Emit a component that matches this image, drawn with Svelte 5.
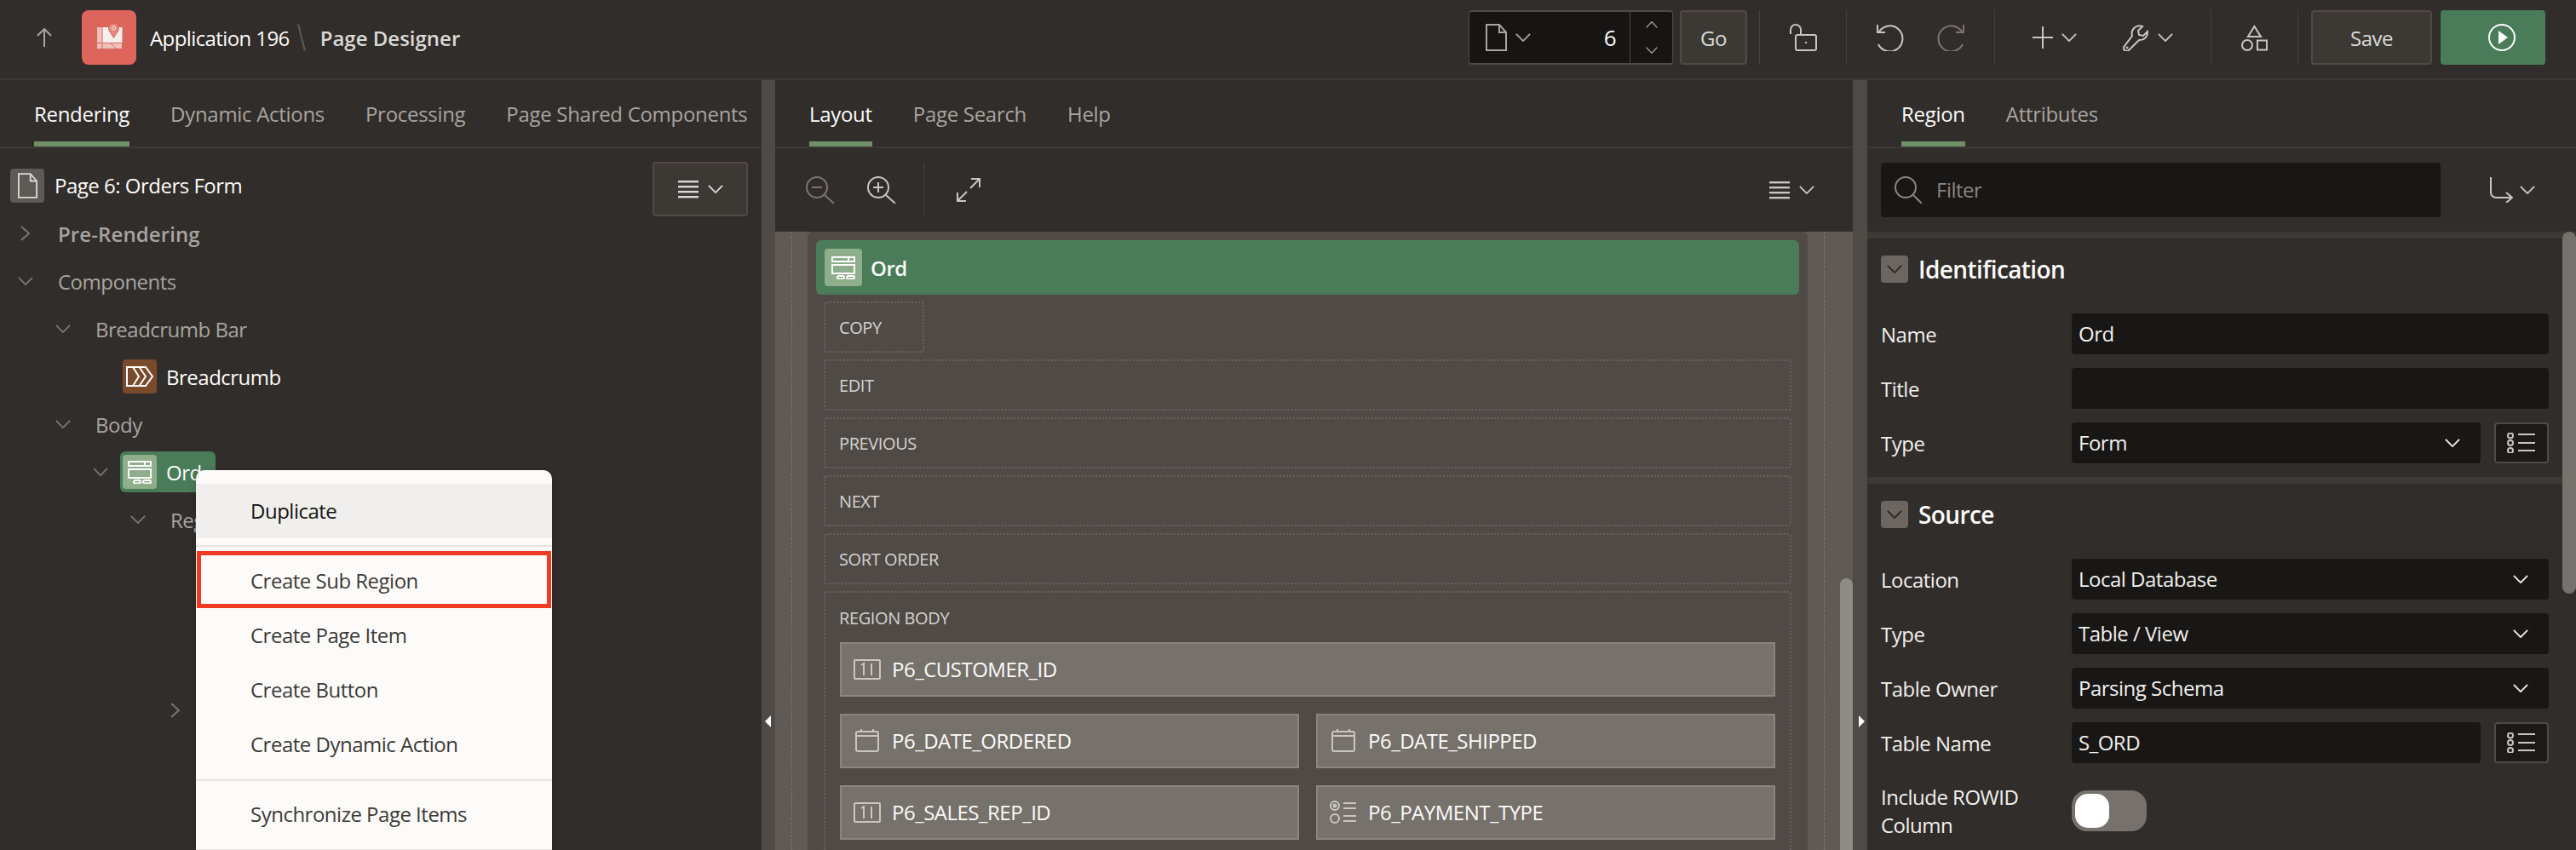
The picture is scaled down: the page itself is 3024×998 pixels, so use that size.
<script>
  const tabsLeft = ["Rendering", "Dynamic Actions", "Processing", "Page Shared Components"];
  const tabsMid = ["Layout", "Page Search", "Help"];
  const tabsRight = ["Region", "Attributes"];

  const tree = [
    { label: "Pre-Rendering", level: 0, state: "closed", strong: true },
    { label: "Components", level: 0, state: "open" },
    { label: "Breadcrumb Bar", level: 1, state: "open" },
    { label: "Breadcrumb", level: 2, icon: "crumb" },
    { label: "Body", level: 1, state: "open" },
    { label: "Ord", level: 2, state: "open", icon: "region", selected: true },
    { label: "Reg", level: 3, state: "open" },
    { level: 4 },
    { level: 4 },
    { level: 4 },
    { level: 4, state: "closed" }
  ];

  const slots = [
    { label: "COPY", short: true },
    { label: "EDIT" },
    { label: "PREVIOUS" },
    { label: "NEXT" },
    { label: "SORT ORDER" }
  ];

  const items = [
    { label: "P6_CUSTOMER_ID", icon: "number", wide: true },
    { label: "P6_DATE_ORDERED", icon: "date" },
    { label: "P6_DATE_SHIPPED", icon: "date" },
    { label: "P6_SALES_REP_ID", icon: "number" },
    { label: "P6_PAYMENT_TYPE", icon: "radio" }
  ];

  const identification = [
    { label: "Name", value: "Ord" },
    { label: "Title", value: "" },
    { label: "Type", value: "Form", select: true, picker: true }
  ];

  const source = [
    { label: "Location", value: "Local Database", select: true },
    { label: "Type", value: "Table / View", select: true },
    { label: "Table Owner", value: "Parsing Schema", select: true },
    { label: "Table Name", value: "S_ORD", picker: true }
  ];
</script>

{#snippet chevron(w = 20, h = 12)}
  <svg class="chev" width={w} height={h} viewBox="0 0 20 12" preserveAspectRatio="none" fill="none" stroke="currentColor" stroke-width="2"><path d="M1 1l9 10 9-10" /></svg>
{/snippet}

{#snippet chevronRight()}
  <svg width="12" height="18" viewBox="0 0 12 18" fill="none" stroke="currentColor" stroke-width="2"><path d="M1 1l9 8-9 8" /></svg>
{/snippet}

{#snippet lines()}
  <svg width="24" height="21" viewBox="0 0 24 21" fill="currentColor"><rect width="24" height="2.4" /><rect y="6" width="24" height="2.4" /><rect y="12" width="24" height="2.4" /><rect y="18" width="24" height="2.4" /></svg>
{/snippet}

{#snippet doc(w = 25, h = 32)}
  <svg width={w} height={h} viewBox="0 0 25 32" fill="none" stroke="currentColor" stroke-width="2"><path d="M1 1h15l8 9v21H1z" /><path d="M16 1v9h8" /></svg>
{/snippet}

{#snippet picker()}
  <svg width="34" height="24" viewBox="0 0 34 24" fill="none" stroke="currentColor" stroke-width="2"><circle cx="4" cy="3.5" r="3" /><circle cx="4" cy="12" r="3" /><circle cx="4" cy="21" r="3" /><path d="M13 2h20M13 12h20M13 21h20" /></svg>
{/snippet}

{#snippet regionIcon()}
  <svg width="28" height="27" viewBox="0 0 28 27" fill="none" stroke="#fff" stroke-width="2"><rect x="1" y="1" width="26" height="5" /><path d="M20 1v5" /><rect x="1" y="10" width="26" height="10" /><rect x="7" y="23" width="8" height="3.500" rx="1.700" /><rect x="18" y="23" width="9" height="3.500" rx="1.700" /></svg>
{/snippet}

{#snippet itemIcon(kind)}
  {#if kind === "number"}
    <svg width="32" height="24" viewBox="0 0 32 24" fill="none" stroke="#c9c6c2" stroke-width="2"><rect x="1" y="1" width="30" height="22" rx="1" /><path d="M9 7l3-2v14M21 5v14" /></svg>
  {:else if kind === "date"}
    <svg width="28" height="27" viewBox="0 0 28 27" fill="none" stroke="#c9c6c2" stroke-width="2"><rect x="1" y="3" width="26" height="23" rx="2" /><path d="M1 8h26M7 0v4M21 0v4" /></svg>
  {:else}
    <svg width="32" height="27" viewBox="0 0 32 27" fill="none" stroke="#c9c6c2" stroke-width="2"><circle cx="6" cy="6" r="5" /><circle cx="6" cy="6" r="1.5" fill="#c9c6c2" /><circle cx="6" cy="21" r="5" /><path d="M16 3h15M16 9h15M16 18h15M16 24h15" /></svg>
  {/if}
{/snippet}

{#snippet tabs(list)}
  <nav class="tabs">
    {#each list as tab, i}
      <span class="tab" class:active={i === 0}>{tab}</span>
    {/each}
  </nav>
{/snippet}

{#snippet field(f)}
  <label class="field-label" for={f.label}>{f.label}</label>
  <div class="control">
    <div class="input" id={f.label}>
      <span>{f.value}</span>
      {#if f.select}{@render chevron(18, 10)}{/if}
    </div>
    {#if f.picker}
      <span class="picker">{@render picker()}</span>
    {/if}
  </div>
{/snippet}

<div class="app">
  <header class="topbar">
    <div class="crumbs">
      <span class="up">
        <svg width="18" height="22" viewBox="0 0 18 22" fill="none" stroke="currentColor" stroke-width="2"><path d="M9 22V2M1 9l8-8 8 8" /></svg>
      </span>
      <span class="logo">
        <svg width="31" height="31" viewBox="0 0 31 31">
          <rect x="0.500" y="4.500" width="30" height="26" fill="#f2c0ba" stroke="#d0685e" />
          <rect x="7" y="5" width="23.500" height="18.500" fill="#f8eeeb" />
          <path d="M0.500 23.500h30M7 5v25.500M16.500 23.500l7.500 7" stroke="#d0685e" fill="none" />
          <path d="M20.500 0.500c-3.500 0-6 2.500-6 5.500 0 3.500 3.500 7 6 11.500 2.500-4.500 6-8 6-11.500 0-3-2.500-5.500-6-5.500z" fill="#e8897f" stroke="#d0685e" />
          <circle cx="20.500" cy="6" r="2" fill="none" stroke="#f8eeeb" />
        </svg>
      </span>
      <span class="app-name">Application 196</span>
      <span class="slash"></span>
      <span class="page-name">Page Designer</span>
    </div>

    <div class="actions">
      <div class="page-field">
        <span class="page-type">{@render doc()}{@render chevron(18, 10)}</span>
        <span class="page-no">6</span>
        <span class="spin">
          <span class="flip">{@render chevron(14, 8)}</span>
          {@render chevron(14, 8)}
        </span>
      </div>
      <span class="btn go">Go</span>
      <span class="sep"></span>
      <span class="tool lock">
        <svg width="33" height="32" viewBox="0 0 33 32" fill="none" stroke="currentColor" stroke-width="2"><path d="M2 12V7a6 6 0 0 1 12 0v5" /><rect x="8" y="13" width="24" height="18" rx="2" /><path d="M20 21v2" /></svg>
      </span>
      <span class="sep"></span>
      <span class="tool history">
        <svg width="33" height="32" viewBox="0 0 33 32" fill="none" stroke="currentColor" stroke-width="2"><path d="M4 9a15 15 0 1 1-1 15" /><path d="M2 1v9h9" /></svg>
        <svg class="dim" width="33" height="32" viewBox="0 0 33 32" fill="none" stroke="currentColor" stroke-width="2"><path d="M29 9a15 15 0 1 0 1 15" /><path d="M31 1v9h-9" /></svg>
      </span>
      <span class="sep"></span>
      <span class="tool create">
        <span class="pair">
          <svg width="24" height="26" viewBox="0 0 24 26" fill="none" stroke="currentColor" stroke-width="2"><path d="M12 0v26M0 13h24" /></svg>
          {@render chevron(18, 10)}
        </span>
        <span class="pair">
          <svg width="31" height="31" viewBox="0 0 31 31" fill="none" stroke="currentColor" stroke-width="2"><path d="M29 8l-5 5-5-1-1-5 5-5a9 9 0 0 0-12 11L2 25a3.500 3.500 0 0 0 5 5l12-12a9 9 0 0 0 10-10z" /><circle cx="5" cy="27" r="0.600" /></svg>
          {@render chevron(18, 10)}
        </span>
      </span>
      <span class="sep"></span>
      <span class="tool shared">
        <svg width="31" height="31" viewBox="0 0 31 31" fill="none" stroke="currentColor" stroke-width="2"><path d="M15.500 2l7.500 12H8z" /><circle cx="7" cy="24" r="6" /><rect x="19" y="18.500" width="11" height="11" /></svg>
      </span>
      <span class="sep"></span>
      <span class="btn save">Save</span>
      <span class="btn run">
        <svg width="32" height="32" viewBox="0 0 32 32"><circle cx="16" cy="16" r="15" fill="none" stroke="#fff" stroke-width="2" /><path d="M12 8l11 8-11 8z" fill="#fff" /></svg>
      </span>
    </div>
  </header>

  <main class="workspace">
    <section class="pane">
      {@render tabs(tabsLeft)}
      <div class="tree-head">
        <span class="page-icon">{@render doc(23, 32)}</span>
        <span class="page-title">Page 6: Orders Form</span>
        <span class="btn menu-btn">{@render lines()}{@render chevron(18, 10)}</span>
      </div>
      <ul class="tree">
        {#each tree as node}
          <li class="row" style="padding-left: {12 + 44 * node.level}px">
            <span class="twist">
              {#if node.state === "open"}{@render chevron(18, 10)}{/if}
              {#if node.state === "closed"}{@render chevronRight()}{/if}
            </span>
            {#if node.icon}
              <span class="node" class:selected={node.selected}>
                <span class="node-icon {node.icon}">
                  {#if node.icon === "crumb"}
                    <svg width="32" height="24" viewBox="0 0 32 24" fill="none" stroke="#fff" stroke-width="2"><path d="M1 1h22l8 11-8 11H1z" /><path d="M8 1l7 11-7 11M15.500 1l7.500 11-7.500 11" /></svg>
                  {:else}
                    {@render regionIcon()}
                  {/if}
                </span>
                <span>{node.label}</span>
              </span>
            {:else if node.label}
              <span class="row-label" class:strong={node.strong}>{node.label}</span>
            {/if}
          </li>
        {/each}
      </ul>

      <div class="context-menu">
        <div class="menu-item first">Duplicate</div>
        <hr />
        <div class="menu-item marked">Create Sub Region</div>
        <div class="menu-item">Create Page Item</div>
        <div class="menu-item">Create Button</div>
        <div class="menu-item">Create Dynamic Action</div>
        <hr />
        <div class="menu-item">Synchronize Page Items</div>
        <hr />
      </div>
    </section>

    <div class="gutter"><i class="tri left"></i></div>

    <section class="pane">
      {@render tabs(tabsMid)}
      <div class="layout-bar">
        <svg class="dim" width="34" height="32" viewBox="0 0 34 32" fill="none" stroke="currentColor" stroke-width="2"><circle cx="13" cy="13" r="12" /><path d="M22 22l11 10M7 13h12" /></svg>
        <svg class="zoom-in" width="34" height="32" viewBox="0 0 34 32" fill="none" stroke="currentColor" stroke-width="2"><circle cx="13" cy="13" r="12" /><path d="M22 22l11 10M7 13h12M13 7v12" /></svg>
        <span class="bar-sep"></span>
        <svg width="28" height="28" viewBox="0 0 28 28" fill="none" stroke="currentColor" stroke-width="2"><path d="M17 1h10v10M27 1L16 12M11 27H1V17M1 27l11-11" /></svg>
        <span class="bar-menu">{@render lines()}{@render chevron(18, 10)}</span>
      </div>
      <div class="canvas">
        <div class="margin"><i></i></div>
        <div class="page">
          <div class="region-bar">
            <span class="region-icon">{@render regionIcon()}</span>
            <span>Ord</span>
          </div>
          <div class="slots">
            {#each slots as slot}
              <div class="slot" class:short={slot.short}>{slot.label}</div>
            {/each}
            <div class="slot body">
              <div class="body-title">REGION BODY</div>
              <div class="items">
                {#each items as item}
                  <div class="item" class:wide={item.wide}>
                    <span class="item-icon">{@render itemIcon(item.icon)}</span>
                    <span>{item.label}</span>
                  </div>
                {/each}
              </div>
            </div>
          </div>
        </div>
        <div class="margin right"><i></i></div>
        <span class="scroll-thumb canvas-thumb"></span>
      </div>
    </section>

    <div class="gutter wide"><i class="tri right"></i></div>

    <section class="pane props">
      {@render tabs(tabsRight)}
      <div class="filter-bar">
        <div class="filter">
          <svg width="32" height="32" viewBox="0 0 32 32" fill="none" stroke="currentColor" stroke-width="2"><circle cx="13" cy="13" r="12" /><path d="M22 22l10 10" /></svg>
          <span class="filter-text">Filter</span>
        </div>
        <span class="goto">
          <svg width="28" height="30" viewBox="0 0 28 30" fill="none" stroke="currentColor" stroke-width="2"><path d="M2 0v18a6 6 0 0 0 6 6h19M20 18l7 6-7 6" /></svg>
          {@render chevron(18, 10)}
        </span>
      </div>
      <div class="prop-scroll">
        <section class="group">
          <h3><span class="toggle">{@render chevron(18, 10)}</span>Identification</h3>
          <div class="fields">
            {#each identification as f}{@render field(f)}{/each}
          </div>
        </section>
        <section class="group">
          <h3><span class="toggle">{@render chevron(18, 10)}</span>Source</h3>
          <div class="fields">
            {#each source as f}{@render field(f)}{/each}
            <span class="field-label rowid">Include ROWID Column</span>
            <div class="switch"><i></i></div>
          </div>
        </section>
        <span class="scroll-thumb prop-thumb"></span>
      </div>
    </section>
  </main>
</div>

<style>
  :global(body) {
    margin: 0;
    background: #312e2b;
  }
  .app {
    width: 3024px;
    height: 998px;
    overflow: hidden;
    display: flex;
    flex-direction: column;
    background: #312d2a;
    color: #fcfbfa;
    font-family: "Open Sans", "Noto Sans", sans-serif;
    font-size: 24px;
    letter-spacing: -0.5px;
  }

  /* top bar */
  .topbar {
    flex: none;
    height: 94px;
    box-sizing: border-box;
    padding-bottom: 4px;
    border-bottom: 2px solid #3d3a36;
    display: flex;
    justify-content: space-between;
    align-items: center;
  }
  .crumbs,
  .actions {
    display: flex;
    align-items: center;
    height: 64px;
  }
  .up {
    width: 96px;
    display: flex;
    justify-content: center;
    padding-left: 8px;
    box-sizing: border-box;
    color: #a8a4a0;
  }
  .logo {
    width: 64px;
    height: 64px;
    box-sizing: border-box;
    padding-bottom: 4px;
    border-radius: 8px;
    background: #dd655b;
    display: grid;
    place-items: center;
    margin-right: 16px;
  }
  .app-name {
    letter-spacing: -0.6px;
  }
  .slash {
    width: 2px;
    height: 32px;
    background: #5f5a56;
    transform: rotate(-14deg);
    margin: 0 21px 0 13px;
  }
  .page-name {
    font-weight: 600;
    color: #dbd9d6;
    letter-spacing: 0;
  }
  .actions {
    margin-right: 36px;
    color: #c9c6c2;
  }
  .page-field {
    width: 240px;
    height: 64px;
    box-sizing: border-box;
    background: #161513;
    border: solid #4f4a46;
    border-width: 2px 1px;
    border-radius: 4px;
    display: flex;
    align-items: center;
  }
  .page-type {
    display: flex;
    align-items: center;
    gap: 10px;
    padding-left: 19px;
    color: #a8a4a0;
  }
  .page-no {
    flex: 1;
    text-align: right;
    padding-right: 16px;
    color: #fcfbfa;
    font-size: 26px;
  }
  .spin {
    width: 49px;
    height: 100%;
    border-left: 1px solid #4f4a46;
    display: flex;
    flex-direction: column;
    justify-content: space-around;
    align-items: center;
    color: #a8a4a0;
  }
  .flip {
    display: flex;
    transform: scaleY(-1);
  }
  .btn {
    height: 64px;
    box-sizing: border-box;
    border: 2px solid #4f4a46;
    border-radius: 4px;
    background: #3c3935;
    display: flex;
    align-items: center;
    justify-content: center;
    color: #dbd9d6;
  }
  .go {
    width: 79px;
    margin-left: 8px;
    margin-right: 14px;
  }
  .sep {
    width: 1px;
    height: 64px;
    background: #45413d;
  }
  .tool {
    display: flex;
    align-items: center;
    justify-content: center;
  }
  .lock {
    width: 101px;
  }
  .history {
    width: 173px;
    gap: 39px;
  }
  .dim {
    color: #7a7570;
  }
  .create {
    width: 253px;
    gap: 54px;
  }
  .pair {
    display: flex;
    align-items: center;
    gap: 10px;
  }
  .shared {
    width: 101px;
  }
  .save {
    width: 142px;
    margin: 0 10px 0 15px;
  }
  .run {
    width: 123px;
    padding-left: 20px;
    background: #4a7c59;
    border-color: #4a7c59;
  }

  /* panes */
  .workspace {
    flex: 1;
    display: flex;
    min-height: 0;
  }
  .pane {
    flex: none;
    width: 894px;
    position: relative;
    display: flex;
    flex-direction: column;
    min-height: 0;
  }
  .pane:nth-of-type(2) {
    width: 1265px;
  }
  .pane.props {
    width: 832px;
  }
  .gutter {
    flex: none;
    width: 16px;
    background: #4f4a46;
    position: relative;
  }
  .gutter.wide {
    width: 17px;
  }
  .tri {
    position: absolute;
    top: 746px;
    width: 0;
    height: 0;
    border: 7px solid transparent;
  }
  .tri.left {
    left: 4px;
    border-right-color: #fcfbfa;
    border-left-width: 0;
  }
  .tri.right {
    right: 3px;
    border-left-color: #fcfbfa;
    border-right-width: 0;
  }

  .tabs {
    flex: none;
    height: 80px;
    box-sizing: border-box;
    border-bottom: 2px solid #3d3a36;
    padding-left: 40px;
    display: flex;
    gap: 48px;
  }
  .tab {
    height: 78px;
    box-sizing: border-box;
    padding-top: 7px;
    border-bottom: 6px solid transparent;
    display: flex;
    align-items: center;
    color: #a8a4a0;
    white-space: nowrap;
    letter-spacing: -0.3px;
  }
  .tab.active {
    color: #fcfbfa;
    border-bottom-color: #6f9168;
  }

  /* tree */
  .tree-head {
    flex: none;
    height: 72px;
    padding: 16px 16px 0 12px;
    box-sizing: border-box;
    display: flex;
    align-items: flex-start;
  }
  .page-icon {
    width: 40px;
    height: 40px;
    margin-top: 8px;
    background: #5f5a56;
    border-radius: 4px;
    display: grid;
    place-items: center;
    color: #dbd9d6;
  }
  .page-title {
    margin: 11px 0 0 12px;
    line-height: 34px;
  }
  .menu-btn {
    width: 112px;
    margin-left: auto;
    gap: 11px;
  }
  .tree {
    list-style: none;
    margin: 0;
    padding: 0;
  }
  .row {
    height: 56px;
    box-sizing: border-box;
    display: flex;
    align-items: center;
    color: #a8a4a0;
  }
  .twist {
    width: 36px;
    display: flex;
    justify-content: center;
    color: #7a7570;
    flex: none;
  }
  .row-label {
    margin-left: 20px;
  }
  .row-label.strong {
    font-weight: 600;
    letter-spacing: 0.1px;
  }
  .node {
    margin-left: 5px;
    padding: 0 3px;
    height: 48px;
    min-width: 106px;
    border-radius: 6px;
    display: flex;
    align-items: center;
    gap: 11px;
    color: #fcfbfa;
  }
  .node.selected {
    background: #4a7c59;
  }
  .node-icon {
    width: 40px;
    height: 40px;
    border-radius: 4px;
    display: grid;
    place-items: center;
    background: #8fae8b;
  }
  .node-icon.crumb {
    background: #7a4a2d;
  }

  /* context menu */
  .context-menu {
    position: absolute;
    left: 230px;
    top: 458px;
    width: 418px;
    padding-top: 16px;
    background: #fcfbfa;
    border-radius: 10px 10px 0 0;
    box-shadow: 0 2px 10px rgba(0, 0, 0, 0.15);
    color: #3d3a36;
  }
  .context-menu hr {
    margin: 8px 0;
    height: 2px;
    border: none;
    background: #e5e3e0;
  }
  .menu-item {
    height: 64px;
    box-sizing: border-box;
    padding: 0 0 3px 64px;
    display: flex;
    align-items: center;
    position: relative;
  }
  .menu-item.first {
    background: #f1efed;
    color: #161513;
    padding-bottom: 1px;
  }
  .menu-item.marked {
    margin-top: 9px;
  }
  .menu-item.marked::after {
    content: "";
    position: absolute;
    inset: -4px 1px 1px 1px;
    border: 5px solid #ee3b22;
  }

  /* layout editor */
  .layout-bar {
    flex: none;
    height: 98px;
    display: flex;
    align-items: center;
    padding: 0 45px 0 36px;
    color: #c9c6c2;
  }
  .zoom-in {
    margin-left: 38px;
  }
  .bar-sep {
    width: 1px;
    height: 64px;
    background: #45413d;
    margin: 0 38px 0 32px;
  }
  .bar-menu {
    margin-left: auto;
    display: flex;
    align-items: center;
    gap: 11px;
  }
  .canvas {
    flex: 1;
    display: flex;
    min-height: 0;
    background: #5f5a56;
    position: relative;
  }
  .margin {
    flex: none;
    width: 38px;
    padding-left: 19px;
    box-sizing: border-box;
  }
  .margin.right {
    width: 53px;
  }
  .margin i {
    display: block;
    height: 100%;
    border-left: 1px dashed #7a7570;
  }
  .page {
    flex: 1;
    min-width: 0;
    padding: 10px 10px 0;
    background: #4f4a46;
    border-radius: 6px 6px 0 0;
  }
  .region-bar {
    height: 64px;
    background: #4a7c59;
    border-radius: 6px;
    display: flex;
    align-items: center;
    padding-left: 10px;
    gap: 10px;
    font-weight: 600;
  }
  .region-icon {
    width: 44px;
    height: 44px;
    border-radius: 4px;
    background: #8fae8b;
    display: grid;
    place-items: center;
  }
  .slots {
    padding: 8px 9px 0;
    display: flex;
    flex-direction: column;
    gap: 8px;
  }
  .slot {
    height: 60px;
    box-sizing: border-box;
    border: 2px dotted #676260;
    border-radius: 3px;
    padding-left: 16px;
    display: flex;
    align-items: center;
    font-size: 20px;
    letter-spacing: -0.4px;
    color: #d6d3cf;
  }
  .slot.short {
    width: 118px;
  }
  .slot.body {
    height: 400px;
    display: block;
    padding: 0 17px 0 16px;
  }
  .body-title {
    height: 58px;
    display: flex;
    align-items: center;
  }
  .items {
    display: grid;
    grid-template-columns: 1fr 1fr;
    gap: 20px;
    margin-left: 1px;
  }
  .item {
    height: 64px;
    box-sizing: border-box;
    background: #76716b;
    border: 2px solid #8a8580;
    padding: 0 0 1px 14px;
    display: flex;
    align-items: center;
    font-size: 24px;
    letter-spacing: -0.5px;
    color: #fcfbfa;
  }
  .item.wide {
    grid-column: 1 / -1;
  }
  .item-icon {
    width: 32px;
    margin-right: 13px;
    display: flex;
    justify-content: center;
  }
  .scroll-thumb {
    position: absolute;
    right: 0;
    width: 15px;
    border-radius: 8px 8px 0 0;
  }
  .canvas-thumb {
    top: 407px;
    bottom: 0;
    background: #8f8b87;
  }

  /* property editor */
  .filter-bar {
    flex: none;
    height: 98px;
    padding-left: 16px;
    display: flex;
    align-items: center;
  }
  .filter {
    width: 657px;
    height: 64px;
    background: #181715;
    border-radius: 4px;
    padding-left: 16px;
    box-sizing: border-box;
    display: flex;
    align-items: center;
    gap: 17px;
    color: #8a8580;
  }
  .filter-text {
    padding-bottom: 2px;
  }
  .goto {
    margin-left: 57px;
    display: flex;
    align-items: center;
    gap: 8px;
    color: #c9c6c2;
  }
  .prop-scroll {
    flex: 1;
    position: relative;
    min-height: 0;
  }
  .prop-thumb {
    top: 0;
    width: 16px;
    height: 425px;
    background: #76716c;
    border-radius: 8px;
  }
  .group {
    border-top: 8px solid #3d3a36;
    padding: 20px 32px 16px 16px;
  }
  .group h3 {
    margin: 0 0 36px;
    height: 32px;
    display: flex;
    align-items: center;
    gap: 12px;
    font-size: 28px;
    font-weight: 600;
    letter-spacing: -0.6px;
  }
  .toggle {
    width: 32px;
    height: 32px;
    border-radius: 4px;
    background: #6b6661;
    display: grid;
    place-items: center;
    color: #2a2724;
  }
  .fields {
    display: grid;
    grid-template-columns: 224px 560px;
    row-gap: 16px;
    align-items: center;
  }
  .field-label {
    color: #f1efed;
    line-height: 33px;
  }
  .control {
    display: flex;
    gap: 16px;
  }
  .input {
    flex: 1;
    height: 47px;
    border-radius: 4px;
    background: #181715;
    padding: 0 24px 1px 8px;
    display: flex;
    align-items: center;
    justify-content: space-between;
    color: #f1efed;
  }
  .picker {
    width: 64px;
    height: 48px;
    box-sizing: border-box;
    border: 2px solid #4f4a46;
    border-radius: 4px;
    background: #1c1a18;
    display: grid;
    place-items: center;
    color: #c9c6c2;
  }
  .field-label.rowid {
    width: 190px;
    margin-top: 7px;
    align-self: start;
  }
  .switch {
    width: 88px;
    height: 48px;
    margin-top: 16px;
    align-self: start;
    border-radius: 18px;
    background: #76716c;
    padding: 4px;
    box-sizing: border-box;
  }
  .switch i {
    display: block;
    width: 40px;
    height: 40px;
    border-radius: 15px;
    background: #fff;
  }
  .chev {
    display: block;
  }
</style>
